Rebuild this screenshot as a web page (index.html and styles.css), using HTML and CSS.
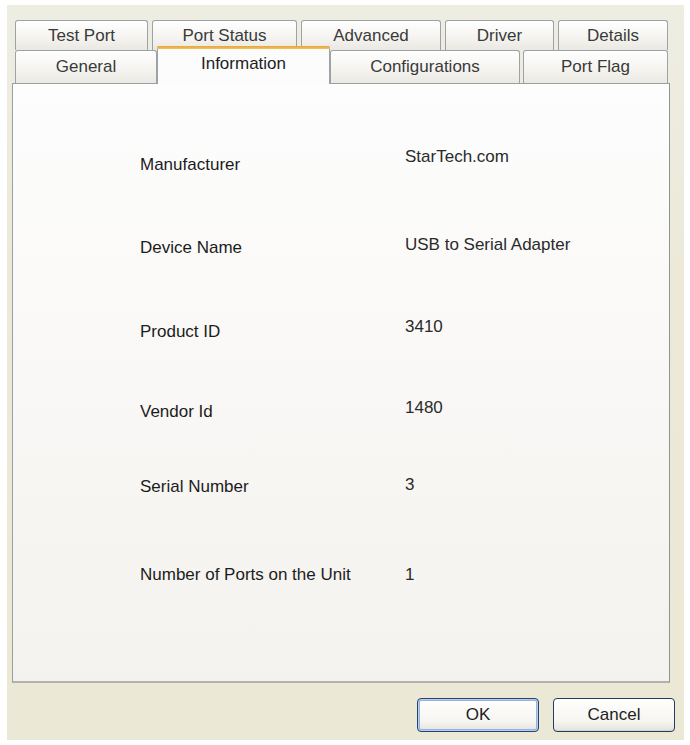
FILE: index.html
```html
<!DOCTYPE html>
<html>
<head>
<meta charset="utf-8">
<title>Properties</title>
<link rel="stylesheet" href="styles.css">
</head>
<body>
<div class="dialog">
  <div class="tabs">
    <div class="tab-row top">
      <div class="tab t-test">Test Port</div>
      <div class="tab t-status">Port Status</div>
      <div class="tab t-adv">Advanced</div>
      <div class="tab t-driver">Driver</div>
      <div class="tab t-details">Details</div>
    </div>
    <div class="tab-row bottom">
      <div class="tab t-general">General</div>
      <div class="tab t-info selected">Information</div>
      <div class="tab t-config">Configurations</div>
      <div class="tab t-flag">Port Flag</div>
    </div>
  </div>
  <div class="panel">
    <div class="info">
      <div class="info-row"><div class="lbl">Manufacturer</div><div class="val">StarTech.com</div></div>
      <div class="info-row"><div class="lbl">Device Name</div><div class="val">USB to Serial Adapter</div></div>
      <div class="info-row"><div class="lbl">Product ID</div><div class="val">3410</div></div>
      <div class="info-row"><div class="lbl">Vendor Id</div><div class="val">1480</div></div>
      <div class="info-row"><div class="lbl">Serial Number</div><div class="val">3</div></div>
      <div class="info-row"><div class="lbl">Number of Ports on the Unit</div><div class="val">1</div></div>
    </div>
  </div>
  <div class="buttons">
    <button class="btn default">OK</button>
    <button class="btn">Cancel</button>
  </div>
</div>
</body>
</html>
```
FILE: styles.css
```css
html, body {
  margin: 0;
  padding: 0;
  background: #ffffff;
}

body {
  font-family: "Liberation Sans", Arial, sans-serif;
  font-size: 17px;
  color: #222;
}

.dialog {
  margin: 5px 0 0 7px;
  width: 677px;
  height: 735px;
  box-sizing: border-box;
  padding: 15px 9px 0 5px;
  background: linear-gradient(#eeede2, #ece9d8 40%, #ebe8d6);
}

.tabs {
  margin: 0 7px 0 3px;
  position: relative;
  z-index: 2;
}

.tab-row {
  display: flex;
}

.tab-row.top {
  height: 30px;
  gap: 4px;
}

.tab-row.bottom {
  height: 33px;
}

.tab {
  box-sizing: border-box;
  border: 1px solid #9da3a4;
  border-bottom: none;
  border-radius: 3px 3px 0 0;
  background: linear-gradient(#ffffff, #f4f3ef 60%, #e9e8e2);
  display: flex;
  align-items: center;
  justify-content: center;
  color: #3a3a3a;
  white-space: nowrap;
}

.t-test { width: 133px; }
.t-status { width: 145px; }
.t-adv { width: 140px; }
.t-driver { width: 109px; }
.t-details { width: 110px; }

.t-general { width: 142px; }
.t-info { width: 173px; }
.t-config { width: 190px; margin-right: 3px; }
.t-flag { width: 145px; }

.tab.selected {
  margin-top: -4px;
  height: 38px;
  position: relative;
  z-index: 3;
  border-top: none;
  background: #fcfcfd;
  color: #1e1e1e;
  padding-bottom: 3px;
  border-radius: 2px 2px 0 0;
}

.tab.selected::before {
  content: "";
  position: absolute;
  left: -1px;
  right: -1px;
  top: 0;
  height: 3px;
  background: linear-gradient(#e8a43a, #f1c35a);
  border-radius: 2px 2px 0 0;
}

.panel {
  margin-right: 5px;
  height: 600px;
  box-sizing: border-box;
  border: 1px solid #9aa0a1;
  border-right-color: #8e9494;
  border-bottom: 2px solid #b0b2ae;
  background: linear-gradient(#fdfdfd, #f9f8f6 50%, #f4f2ee);
  padding: 63px 0 0 127px;
  position: relative;
  z-index: 1;
}

.info-row {
  display: grid;
  grid-template-columns: 265px auto;
  line-height: 20px;
}

.info-row:nth-child(1) { height: 88px; }
.info-row:nth-child(2) { height: 82px; }
.info-row:nth-child(3) { height: 81px; }
.info-row:nth-child(4) { height: 77px; }
.info-row:nth-child(5) { height: 90px; }
.info-row:nth-child(6) { height: 20px; }

.info-row:nth-child(1) .lbl { padding-top: 8px; }
.info-row:nth-child(2) .lbl { padding-top: 3px; }
.info-row:nth-child(3) .lbl { padding-top: 5px; }
.info-row:nth-child(4) .lbl { padding-top: 4px; }
.info-row:nth-child(5) .lbl { padding-top: 2px; }
.info-row:nth-child(6) .lbl { padding-top: 0; }

.lbl {
  color: #1c1c1c;
  white-space: nowrap;
}

.val {
  color: #2a2a2a;
  white-space: nowrap;
}

.buttons {
  margin-top: 15px;
  display: flex;
  justify-content: flex-end;
  gap: 14px;
}

.btn {
  width: 122px;
  height: 34px;
  box-sizing: border-box;
  border: 1px solid #1f3f66;
  border-radius: 4px;
  background: linear-gradient(#ffffff, #f6f5f1 70%, #e3e2da);
  font-family: "Liberation Sans", Arial, sans-serif;
  font-size: 17px;
  color: #222;
  padding: 0;
  box-shadow: inset 0 -1px 0 #d6d4cc;
}

.btn.default {
  border-color: #23456e;
  box-shadow: inset 0 0 0 1px #b9cdef, inset 0 0 0 2px #97b2e0;
}
```
